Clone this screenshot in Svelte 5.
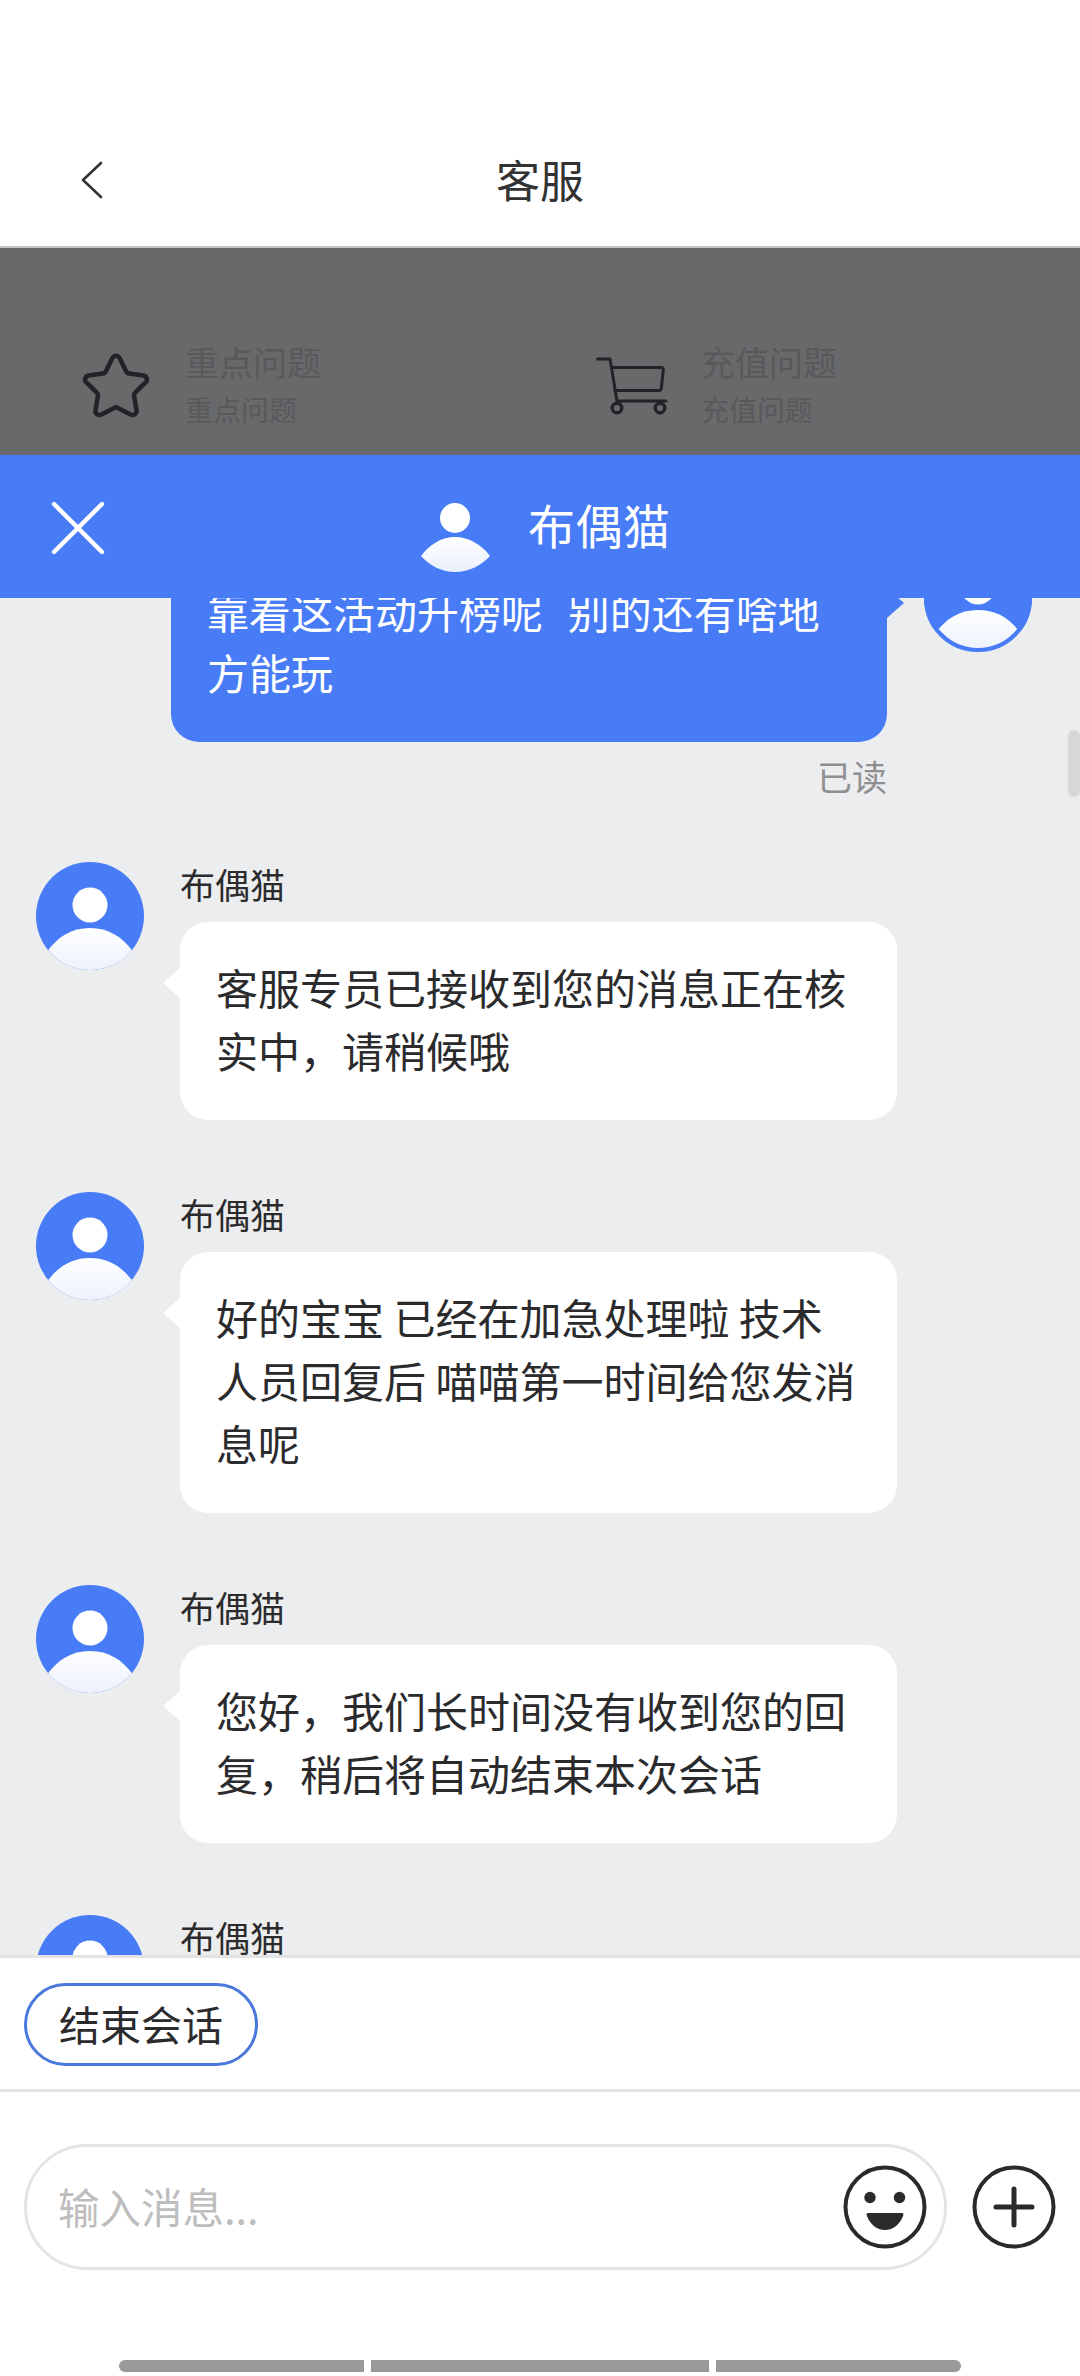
<script>
  const messages = [
    { id: 1, lines: ['客服专员已接收到您的消息正在核', '实中，请稍候哦'] },
    { id: 2, lines: ['好的宝宝 已经在加急处理啦 技术', '人员回复后 喵喵第一时间给您发消', '息呢'] },
    { id: 3, lines: ['您好，我们长时间没有收到您的回', '复，稍后将自动结束本次会话'] }
  ];
</script>

{#snippet avatar(cls)}
  <svg class={cls} viewBox="0 0 108 108" aria-hidden="true">
    <defs>
      <clipPath id="clip-{cls}"><circle cx="54" cy="54" r="54" /></clipPath>
      <linearGradient id="grad-{cls}" x1="0" y1="0" x2="0" y2="1">
        <stop offset="0" stop-color="#ffffff" />
        <stop offset="1" stop-color="#ecf1fc" />
      </linearGradient>
    </defs>
    <circle cx="54" cy="54" r="54" fill="#477cf6" />
    <g clip-path="url(#clip-{cls})">
      <circle cx="54" cy="43" r="17.5" fill="#fff" />
      <path d="M54 66C36 66 22 74 10 91V108H98V91C86 74 72 66 54 66Z" fill="url(#grad-{cls})" />
    </g>
    {#if cls === 'mine-avatar'}
      <circle cx="54" cy="54" r="52" fill="none" stroke="#477cf6" stroke-width="4" />
    {/if}
  </svg>
{/snippet}

<div class="page">
  <header class="nav">
    <svg class="back" viewBox="0 0 24 40" aria-hidden="true"><path d="M21 3L3 20L21 37" fill="none" stroke="#333" stroke-width="2.6" stroke-linecap="round" stroke-linejoin="round" /></svg>
    <h1>客服</h1>
  </header>

  <section class="dim">
    <div class="quick">
      <svg class="star" viewBox="0 0 72 68" aria-hidden="true"><path d="M36 4.5C37.6 4.5 38.8 5.4 39.6 7L45.8 19.6C46.4 20.9 47.4 21.6 48.8 21.8L62.7 23.8C65.9 24.3 67.2 28.1 64.9 30.4L54.8 40.2C53.8 41.2 53.4 42.4 53.6 43.8L56 57.6C56.5 60.9 53.1 63.3 50.2 61.8L37.9 55.3C36.6 54.6 35.4 54.6 34.1 55.3L21.8 61.8C18.9 63.3 15.5 60.9 16 57.6L18.4 43.8C18.6 42.4 18.2 41.2 17.2 40.2L7.1 30.4C4.8 28.1 6.1 24.3 9.3 23.8L23.2 21.8C24.6 21.6 25.6 20.9 26.2 19.6L32.4 7C33.2 5.4 34.4 4.5 36 4.5Z" fill="none" stroke="#222326" stroke-width="4.4" stroke-linejoin="round" /></svg>
      <div class="qtext"><span class="qt">重点问题</span><span class="qs">重点问题</span></div>
    </div>
    <div class="quick second">
      <svg class="cart" viewBox="0 0 72 58" aria-hidden="true">
        <path d="M1.5 2H14L21 44H70" fill="none" stroke="#222326" stroke-width="3" stroke-linecap="round" stroke-linejoin="round" />
        <path d="M15.5 10.5H65C66.6 10.5 67.5 11.5 67.3 13.1L65.3 31C65.1 32.6 64.1 33.5 62.6 33.5H19" fill="none" stroke="#222326" stroke-width="3" stroke-linecap="round" stroke-linejoin="round" />
        <circle cx="21" cy="51" r="4.8" fill="none" stroke="#222326" stroke-width="3.4" />
        <circle cx="64" cy="51" r="4.8" fill="none" stroke="#222326" stroke-width="3.4" />
      </svg>
      <div class="qtext"><span class="qt">充值问题</span><span class="qs">充值问题</span></div>
    </div>
  </section>

  <section class="bar">
    <svg class="close" viewBox="0 0 54 54" aria-hidden="true"><path d="M3 3L51 51M51 3L3 51" fill="none" stroke="#fff" stroke-width="4.4" stroke-linecap="round" /></svg>
    <div class="agent">
      <svg class="agent-icon" viewBox="0 0 72 70" aria-hidden="true">
        <defs><linearGradient id="agent-grad" x1="0" y1="0" x2="0" y2="1"><stop offset="0" stop-color="#fff" /><stop offset="1" stop-color="#e9effd" /></linearGradient></defs>
        <circle cx="35" cy="15" r="15" fill="#fff" />
        <path d="M1 53C9 42 21 34 35 34C49 34 62 42 70 53C62 62 49 69 35 69C21 69 9 62 1 53Z" fill="url(#agent-grad)" />
      </svg>
      <span>布偶猫</span>
    </div>
  </section>

  <main class="chat">
    <div class="mine">
      <div class="mine-bubble">
        <p>靠着这活动升榜呢&nbsp;&nbsp;别的还有啥地</p>
        <p>方能玩</p>
      </div>
      {@render avatar('mine-avatar')}
    </div>
    <div class="read">已读</div>

    {#each messages as m (m.id)}
      <article class="msg">
        {@render avatar('av' + m.id)}
        <div class="msg-body">
          <div class="name">布偶猫</div>
          <div class="bubble">
            {#each m.lines as line}<p>{line}</p>{/each}
          </div>
        </div>
      </article>
    {/each}

    <article class="msg">
      {@render avatar('av4')}
      <div class="msg-body"><div class="name">布偶猫</div></div>
    </article>
    <div class="scroll-thumb"></div>
  </main>

  <section class="actions"><button class="end">结束会话</button></section>

  <footer class="composer">
    <div class="field">
      <span class="placeholder">输入消息...</span>
      <svg class="ico" viewBox="0 0 84 84" aria-hidden="true">
        <circle cx="42" cy="42" r="39.5" fill="none" stroke="#2a2a2c" stroke-width="4" />
        <circle cx="27" cy="32.5" r="5.7" fill="#2a2a2c" />
        <circle cx="56.5" cy="32.5" r="5.7" fill="#2a2a2c" />
        <path d="M25 48H59C60.5 48 60.7 49.2 60.2 50.5C57.5 59 50 65 42 65C34 65 26.5 59 23.8 50.5C23.3 49.2 23.5 48 25 48Z" fill="#2a2a2c" />
      </svg>
    </div>
    <svg class="ico plus" viewBox="0 0 84 84" aria-hidden="true">
      <circle cx="42" cy="42" r="39.5" fill="none" stroke="#2a2a2c" stroke-width="4" />
      <path d="M24 42H60M42 24V60" fill="none" stroke="#2a2a2c" stroke-width="5" stroke-linecap="round" />
    </svg>
  </footer>

  <div class="home">
    <i class="seg a"></i><i class="seg b"></i><i class="seg c"></i>
  </div>
</div>

<style>
  :global(body) { margin: 0; background: #fff; }
  .page {
    width: 1080px;
    height: 2376px;
    display: flex;
    flex-direction: column;
    overflow: hidden;
    position: relative;
    font-family: "Noto Sans CJK SC", "Noto Sans", sans-serif;
    color: #2b2b2d;
  }
  p { margin: 0; }

  .nav {
    height: 248px;
    flex: none;
    box-sizing: border-box;
    border-bottom: 2px solid #c4c4c4;
    position: relative;
    display: flex;
    justify-content: center;
    padding-top: 148px;
    background: #fff;
  }
  .nav h1 { margin: 0; font-size: 44px; font-weight: 400; line-height: 62px; color: #333; }
  .back { position: absolute; left: 80px; top: 160px; width: 24px; height: 40px; }

  .dim {
    height: 207px;
    flex: none;
    background: #68696b;
    display: flex;
    box-sizing: border-box;
    padding: 94px 0 0 79px;
  }
  .quick { display: flex; align-items: flex-start; width: 517px; flex: none; }
  .second { width: auto; }
  .star { width: 74px; height: 70px; margin-top: 9px; flex: none; }
  .cart { width: 72px; height: 58px; margin-top: 15px; flex: none; }
  .qtext { display: flex; flex-direction: column; margin-left: 32px; color: #58595b; }
  .second .qtext { margin-left: 33px; }
  .qt { font-size: 34px; line-height: 40px; }
  .qs { font-size: 28px; line-height: 40px; margin-top: 7px; }

  .bar {
    height: 143px;
    flex: none;
    background: #477cf6;
    position: relative;
    z-index: 2;
    display: flex;
    align-items: center;
    justify-content: center;
  }
  .close { position: absolute; left: 51px; top: 46px; width: 54px; height: 54px; }
  .agent { display: flex; align-items: center; gap: 36px; color: #fff; font-size: 47px; margin-left: 12px; }
  .agent-icon { width: 72px; height: 70px; margin-top: 23px; }
  .agent span { line-height: 62px; margin-top: -5px; width: 144px; letter-spacing: 0.5px; }

  .chat {
    flex: 1;
    min-height: 0;
    position: relative;
    background: #ecedef;
    overflow: hidden;
    padding: 0 36px;
  }
  .mine {
    display: flex;
    align-items: flex-start;
    margin-top: -50px;
    margin-left: 135px;
  }
  .mine-bubble {
    position: relative;
    width: 716px;
    height: 194px;
    flex: none;
    box-sizing: border-box;
    padding: 32px 36px 0;
    background: #477cf6;
    border-radius: 28px;
    color: #fff;
    font-size: 42px;
    line-height: 61px;
    word-spacing: 3px;
    white-space: nowrap;
  }
  .mine-bubble::after {
    content: "";
    position: absolute;
    right: -17px;
    top: 40px;
    width: 0;
    height: 0;
    border-style: solid;
    border-width: 15px 0 15px 17px;
    border-color: transparent transparent transparent #477cf6;
  }
  .mine-avatar { width: 108px; height: 108px; flex: none; margin: -4px 0 0 37px; }
  .read {
    margin: 9px 0 61px;
    width: 851px;
    text-align: right;
    font-size: 35px;
    line-height: 50px;
    color: #8f8f91;
  }

  .msg { display: flex; align-items: flex-start; gap: 36px; margin-bottom: 72px; }
  .msg svg { width: 108px; height: 108px; flex: none; }
  .msg-body { width: 717px; }
  .name { font-size: 35px; line-height: 48px; color: #2b2b2d; margin-top: -2px; }
  .bubble {
    position: relative;
    margin-top: 14px;
    box-sizing: border-box;
    background: #fff;
    border-radius: 28px;
    padding: 33px 36px 39px;
    font-size: 42px;
    line-height: 63px;
    color: #2b2b2d;
  }
  .bubble::before {
    content: "";
    position: absolute;
    left: -17px;
    top: 46px;
    width: 0;
    height: 0;
    border-style: solid;
    border-width: 15px 17px 15px 0;
    border-color: transparent #fff transparent transparent;
  }
  .scroll-thumb {
    position: absolute;
    right: 0;
    top: 132px;
    width: 12px;
    height: 67px;
    border-radius: 6px;
    background: #d6d7d9;
  }

  .actions {
    height: 137px;
    flex: none;
    box-sizing: border-box;
    background: #fff;
    border-top: 3px solid #e4e4e4;
    border-bottom: 3px solid #e4e4e4;
    padding: 25px 0 0 24px;
  }
  .end {
    display: block;
    width: 234px;
    height: 83px;
    box-sizing: border-box;
    border: 3px solid #4a78dc;
    border-radius: 42px;
    background: #fff;
    padding: 0 0 3px;
    font: inherit;
    font-size: 41px;
    color: #2b2b2d;
  }

  .composer {
    height: 284px;
    flex: none;
    box-sizing: border-box;
    padding: 52px 24px 0;
    display: flex;
    align-items: flex-start;
    background: #fff;
  }
  .field {
    width: 923px;
    height: 126px;
    flex: none;
    box-sizing: border-box;
    border: 3px solid #e4e4e4;
    border-radius: 63px;
    display: flex;
    align-items: center;
    justify-content: space-between;
    padding: 0 17px 0 31px;
  }
  .placeholder { font-size: 41.5px; color: #bdbdbd; margin-top: -3px; }
  .ico { width: 84px; height: 84px; flex: none; }
  .plus { margin: 21px 0 0 25px; }

  .home {
    position: absolute;
    left: 119px;
    bottom: 4px;
    width: 842px;
    height: 12px;
    display: flex;
    gap: 7px;
  }
  .seg { display: block; height: 12px; background: #999; }
  .a { width: 245px; border-radius: 6px 0 0 6px; }
  .b { width: 338px; }
  .c { width: 245px; border-radius: 0 6px 6px 0; }
</style>
